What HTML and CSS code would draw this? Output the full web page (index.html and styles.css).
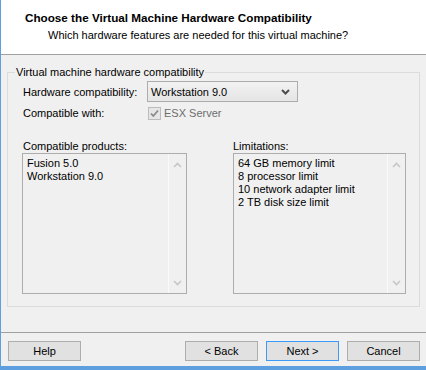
FILE: index.html
```html
<!DOCTYPE html>
<html lang="en">
<head>
	<meta charset="UTF-8">
	<title>New Virtual Machine Wizard</title>
	<link rel="stylesheet" href="styles.css">
</head>
<body>
	<div class="dialog">
		<div class="header">
			<h1>Choose the Virtual Machine Hardware Compatibility</h1>
			<p>Which hardware features are needed for this virtual machine?</p>
		</div>

		<div class="content">
			<fieldset class="group">
				<legend>Virtual machine hardware compatibility</legend>
				<div class="group-body">
					<div class="row">
						<span class="label">Hardware compatibility:</span>
						<div class="select">
							<span>Workstation 9.0</span>
							<svg width="9" height="6" viewBox="0 0 9 6"><path d="M1 1 L4.5 4.5 L8 1" fill="none" stroke="#4d4d4d" stroke-width="2"/></svg>
						</div>
					</div>
					<div class="row row-check">
						<span class="label">Compatible with:</span>
						<span class="check">
							<svg width="13" height="13" viewBox="0 0 13 13"><rect x="0.5" y="0.5" width="12" height="12" fill="#e6e6e6" stroke="#bcbcbc"/><path d="M3 6.5 L5.3 9 L10 3.5" fill="none" stroke="#8a8a8a" stroke-width="1.8"/></svg>
							<span class="disabled">ESX Server</span>
						</span>
					</div>

					<div class="lists">
						<div class="col col-left">
							<div class="list-label">Compatible products:</div>
							<div class="listbox">
								<ul>
									<li>Fusion 5.0</li>
									<li>Workstation 9.0</li>
								</ul>
								<div class="scroll">
									<svg width="9" height="6" viewBox="0 0 9 6"><path d="M1 5 L4.5 1.5 L8 5" fill="none" stroke="#c6c6c6" stroke-width="1.6"/></svg>
									<svg width="9" height="6" viewBox="0 0 9 6"><path d="M1 1 L4.5 4.5 L8 1" fill="none" stroke="#c6c6c6" stroke-width="1.6"/></svg>
								</div>
							</div>
						</div>
						<div class="col col-right">
							<div class="list-label">Limitations:</div>
							<div class="listbox">
								<ul>
									<li>64 GB memory limit</li>
									<li>8 processor limit</li>
									<li>10 network adapter limit</li>
									<li>2 TB disk size limit</li>
								</ul>
								<div class="scroll">
									<svg width="9" height="6" viewBox="0 0 9 6"><path d="M1 5 L4.5 1.5 L8 5" fill="none" stroke="#c6c6c6" stroke-width="1.6"/></svg>
									<svg width="9" height="6" viewBox="0 0 9 6"><path d="M1 1 L4.5 4.5 L8 1" fill="none" stroke="#c6c6c6" stroke-width="1.6"/></svg>
								</div>
							</div>
						</div>
					</div>
				</div>
			</fieldset>
		</div>

		<div class="footer">
			<button class="btn">Help</button>
			<div class="spacer"></div>
			<button class="btn">&lt; Back</button>
			<button class="btn btn-default">Next &gt;</button>
			<button class="btn">Cancel</button>
		</div>
	</div>
</body>
</html>
```

FILE: styles.css
```css
html,body{margin:0;padding:0;background:#f0f0f0;}
body{font-family:"Liberation Sans",Arial,sans-serif;font-size:11px;color:#000;}
ul{list-style:none;padding:0;margin:0;}

.dialog{width:426px;height:370px;box-sizing:border-box;border-left:1px solid #5e9fe0;border-bottom:4px solid #5e9fe0;display:flex;flex-direction:column;background:#f0f0f0;}

.header{height:54px;background:#fff;border-bottom:1px solid #a0a0a0;padding-left:24px;}
.header h1{margin:0;padding-top:11px;font-size:11.7px;font-weight:bold;line-height:13px;}
.header p{margin:5px 0 0 23px;line-height:13px;}

.content{flex:1;padding:10px 6px 0 6px;}
.group{margin:0;padding:0 0 12px 7px;border:1px solid #dcdcdc;height:242px;box-sizing:border-box;}
.group legend{padding:0 1px;line-height:14px;}
.group-body{padding:2px 13px 0 7px;}

.row{display:flex;align-items:center;height:21px;}
.label{width:125px;padding-left:1px;box-sizing:border-box;}
.select{width:151px;height:21px;box-sizing:border-box;border:1px solid #acacac;background:linear-gradient(#f2f2f2,#e5e5e5);display:flex;align-items:center;justify-content:space-between;padding:0 7px 0 3px;}
.row-check{margin-top:4px;height:14px;}
.check{display:flex;align-items:center;gap:3px;margin-left:1px;}
.check svg{display:block;}
.disabled{color:#6d6d6d;}

.lists{display:flex;justify-content:space-between;margin-top:19px;}
.col{display:flex;flex-direction:column;}
.col-left{width:165px;}
.col-right{width:173px;}
.list-label{line-height:14px;height:14px;padding-left:1px;}
.col-right .list-label{margin-left:-1px;}
.listbox{height:141px;box-sizing:border-box;border:1px solid #adadad;background:#f0f0f0;display:flex;}
.listbox ul{flex:1;padding:3px 4px;}
.listbox li{line-height:13px;}
.scroll{width:17px;border-left:1px solid #fafafa;display:flex;flex-direction:column;justify-content:space-between;align-items:center;padding:8px 0 7px;}
.scroll svg{display:block;}

.footer{height:34px;border-top:1px solid #a0a0a0;display:flex;align-items:flex-start;padding:8px 6px 0 7px;gap:8px;box-sizing:border-box;}
.spacer{flex:1;}
.btn{width:73px;height:20px;box-sizing:border-box;border:1px solid #adadad;background:#e1e1e1;font-family:inherit;font-size:11px;color:#000;padding:0;margin:0;}
.btn-default{border-color:#3c9cf5;}
```
